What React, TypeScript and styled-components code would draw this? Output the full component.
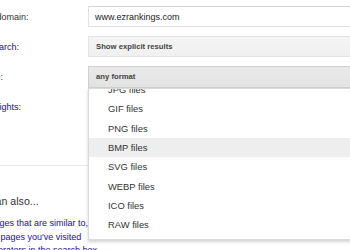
import styled, { createGlobalStyle } from "styled-components";

const GlobalStyle = createGlobalStyle`
  html, body {
    margin: 0;
    background: #fff;
    overflow: hidden;
  }
  body {
    font-family: "Liberation Sans", Arial, sans-serif;
  }
`;

// the page is scrolled a little to the right, so the labels start off-screen
const Page = styled.div`
  margin-left: -30.5px;
  padding-top: 6px;
  width: 520px;
`;

const Form = styled.div`
  display: grid;
  grid-template-columns: 118.5px 320px;
  grid-auto-rows: 21px;
  row-gap: 9px;
  align-items: center;
`;

const Label = styled.div<{ $link?: boolean }>`
  font-size: 9px;
  color: ${(p) => (p.$link ? "#1a0dab" : "#333")};
  white-space: nowrap;
`;

const TextField = styled.div`
  box-sizing: border-box;
  height: 21px;
  display: flex;
  align-items: center;
  padding: 0 6px;
  border: 1px solid #e2e2e2;
  border-top-color: #d4d4d4;
  background: #fff;
  font-size: 9px;
  color: #222;
`;

const Select = styled.div<{ $open?: boolean }>`
  position: relative;
  box-sizing: border-box;
  height: ${(p) => (p.$open ? "22px" : "21px")};
  display: flex;
  align-items: center;
  padding: 0 7px;
  border: 1px solid ${(p) => (p.$open ? "#cfcfcf" : "#e4e4e4")};
  background: ${(p) =>
    p.$open
      ? "linear-gradient(#e9e9e9, #e3e3e3)"
      : "linear-gradient(#f4f4f4, #f0f0f0)"};
  font-size: 7.7px;
  font-weight: bold;
  color: #444;
`;

const Menu = styled.div`
  position: absolute;
  top: 21px;
  left: -1px;
  width: 300px;
  height: 152px;
  box-sizing: border-box;
  border: 1px solid #d9d9d9;
  background: #fff;
  box-shadow: 0 2px 3px rgba(0, 0, 0, 0.18);
  overflow: hidden;
  z-index: 2;
  font-weight: normal;
`;

const MenuList = styled.div`
  margin-top: -8.7px;
  display: flex;
  flex-direction: column;
`;

const MenuItem = styled.div<{ $active?: boolean }>`
  height: 19.33px;
  display: flex;
  align-items: center;
  padding-left: 19px;
  font-size: 9.4px;
  color: #333;
  background: ${(p) => (p.$active ? "#eeeeee" : "transparent")};
`;

const Divider = styled.div`
  margin-top: 48px;
  border-top: 1px solid #ebebeb;
`;

const AlsoSection = styled.section`
  padding-top: 28.5px;
`;

const AlsoTitle = styled.h2`
  margin: 0 0 9.75px;
  font-size: 10.6px;
  line-height: 13px;
  font-weight: normal;
  color: #333;
`;

const AlsoLink = styled.a`
  display: block;
  font-size: 9px;
  line-height: 13.5px;
  color: #1a0dab;
  text-decoration: none;
  white-space: nowrap;
`;

const formats = [
  "JPG files",
  "GIF files",
  "PNG files",
  "BMP files",
  "SVG files",
  "WEBP files",
  "ICO files",
  "RAW files",
];

export default function App() {
  return (
    <>
      <GlobalStyle />
      <Page>
        <Form>
          <Label>site or domain:</Label>
          <TextField>www.ezrankings.com</TextField>

          <Label $link>SafeSearch:</Label>
          <Select>Show explicit results</Select>

          <Label>file type:</Label>
          <Select $open>
            any format
            <Menu>
              <MenuList>
                {formats.map((f) => (
                  <MenuItem key={f} $active={f === "BMP files"}>
                    {f}
                  </MenuItem>
                ))}
              </MenuList>
            </Menu>
          </Select>

          <Label $link>usage rights:</Label>
          <Select>not filtered by licence</Select>
        </Form>

        <Divider />

        <AlsoSection>
          <AlsoTitle>You can also...</AlsoTitle>
          <AlsoLink href="#">Find pages that are similar to, or link to, a URL</AlsoLink>
          <AlsoLink href="#">Search pages you've visited</AlsoLink>
          <AlsoLink href="#">Use operators in the search box</AlsoLink>
        </AlsoSection>
      </Page>
    </>
  );
}
